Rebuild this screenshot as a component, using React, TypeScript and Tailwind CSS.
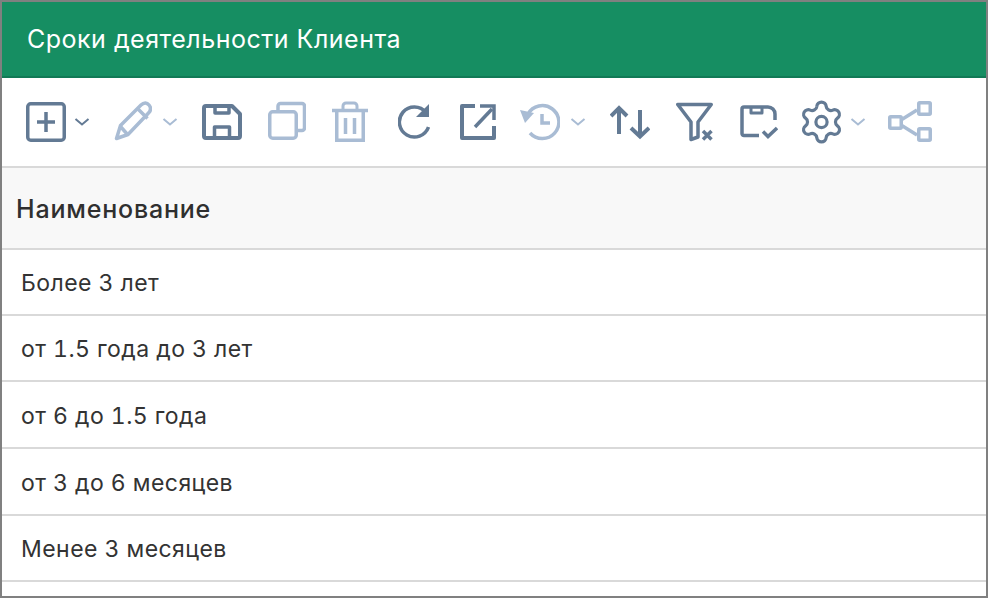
const dark = "#637a94";
const light = "#a9bcd4";

function Chevron({ ml }: { ml: string }) {
  return (
    <svg className={ml} width="16" height="44" viewBox="0 0 16 44" fill="none" stroke={light} strokeWidth="2">
      <path d="M1.5 19l6.5 5.5 6.5-5.5" />
    </svg>
  );
}

function Rows() {
  const rows = ["Более 3 лет", "от 1.5 года до 3 лет", "от 6 до 1.5 года", "от 3 до 6 месяцев", "Менее 3 месяцев"];
  return (
    <div>
      {rows.map((r, i) => (
        <div
          key={r}
          className={
            "flex items-center border-b-2 border-[#d9d9d9] pl-[19px] pt-[3px] text-[23px] tabular-nums tracking-[0.45px] text-[#333333] " +
            (i === 3 || i === 2 ? "h-[67px]" : "h-[66px]")
          }
        >
          {r}
        </div>
      ))}
    </div>
  );
}

export default function App() {
  return (
    <div className="h-[598px] w-[988px] overflow-hidden border-2 border-[#808080] bg-white font-['Inter',sans-serif]">
      {/* header */}
      <div className="flex h-[76px] items-center border-b-2 border-[#127a56] bg-[#168e62] pl-[25px] pt-[1px] text-[25px] tracking-[0.5px] text-white">
        Сроки деятельности Клиента
      </div>

      {/* toolbar */}
      <div className="flex h-[90px] items-center border-b-2 border-[#d9d9d9] pl-[24px]">
        {/* add */}
        <svg width="40" height="44" viewBox="0 0 40 44" fill="none" stroke={dark} strokeWidth="3.5">
          <rect x="1.75" y="3.75" width="36.5" height="36.5" rx="3" />
          <path d="M20 12v20M11 22h18" strokeWidth="3.5" />
        </svg>
        <svg className="ml-[8px]" width="16" height="44" viewBox="0 0 16 44" fill="none" stroke={dark} strokeWidth="2">
          <path d="M1.5 19l6.5 5.5 6.5-5.5" />
        </svg>
        {/* edit */}
        <svg className="ml-[24px]" width="38" height="44" viewBox="0 0 38 44" fill="none" stroke={light} strokeWidth="3.5" strokeLinejoin="round">
          <path d="M2.500 38.500l4-13L27 5c3-3 6-2.500 8 0s2.500 5-.5 8L14 34.500z" />
          <path d="M23.500 8.500l10 10M6 26l8 9" />
        </svg>
        <Chevron ml="ml-[10px]" />
        {/* save */}
        <svg className="ml-[24px]" width="40" height="44" viewBox="0 0 40 44" fill="none" stroke={dark} strokeWidth="4" strokeLinejoin="round">
          <path d="M5 6h25l8 8v22a2 2 0 0 1-2 2H4a2 2 0 0 1-2-2V8a2 2 0 0 1 2-2z" />
          <path d="M13 6v7h14V6" strokeWidth="3.500" />
          <path d="M12.500 38V27h15v11" strokeWidth="3.500" />
        </svg>
        {/* copy */}
        <svg className="ml-[26px]" width="38" height="44" viewBox="0 0 38 44" fill="none" stroke={light} strokeWidth="3.500">
          <rect x="1.750" y="11.750" width="26.500" height="26.500" rx="3" />
          <path d="M10 11V6a2.500 2.500 0 0 1 2.500-2.500h21.500a2.500 2.500 0 0 1 2.500 2.500v22a2.500 2.500 0 0 1-2.500 2.500H29" />
        </svg>
        {/* delete */}
        <svg className="ml-[26px]" width="36" height="44" viewBox="0 0 36 44" fill="none" stroke={light} strokeWidth="3.500">
          <path d="M0 10.500h36M4.750 10.500V40.200h26.500V10.500" />
          <path d="M11 10V6a3 3 0 0 1 3-3h8a3 3 0 0 1 3 3v4" strokeWidth="3" />
          <path d="M13.500 18v16M22.500 18v16" />
        </svg>
        {/* refresh */}
        <svg className="ml-[30px]" width="32" height="44" viewBox="0 0 32 44" fill="none" stroke={dark} strokeWidth="3.500">
          <path d="M28 12.500A15 15 0 1 0 30.500 27" />
          <path d="M31 4v13H18z" fill={dark} stroke="none" />
        </svg>
        {/* open */}
        <svg className="ml-[30px]" width="36" height="44" viewBox="0 0 36 44" fill="none" stroke={dark} strokeWidth="4">
          <path d="M15 6H2v32h32V26" strokeLinejoin="round" />
          <path d="M15 27L32 9" strokeWidth="3.500" />
          <path d="M20 6h14v14" strokeWidth="3.500" />
        </svg>
        {/* history */}
        <svg className="ml-[24px]" width="40" height="44" viewBox="0 0 40 44" fill="none" stroke={light} strokeWidth="3.500">
          <path d="M8 14A16.500 16.500 0 1 1 10 33" />
          <path d="M0 10l14 3-9 10z" fill={light} stroke="none" />
          <path d="M22 14v9h8" />
        </svg>
        <Chevron ml="ml-[10px]" />
        {/* sort */}
        <svg className="ml-[24px]" width="40" height="44" viewBox="0 0 40 44" fill="none" stroke={dark} strokeWidth="4">
          <path d="M9 8v26M1 16l8-8 8 8" />
          <path d="M30 10v26M21 28l9 8.500 9-8.500" />
        </svg>
        {/* filter clear */}
        <svg className="ml-[26px]" width="38" height="44" viewBox="0 0 38 44" fill="none" stroke={dark} strokeWidth="3.500" strokeLinejoin="round">
          <path d="M1.750 4.500h33.500L22 22v15l-7 2.500V22z" />
          <path d="M27 31l8.500 8.500M35.500 31L27 39.500" />
        </svg>
        {/* save state */}
        <svg className="ml-[26px]" width="38" height="44" viewBox="0 0 38 44" fill="none" stroke={dark} strokeWidth="3.500" strokeLinejoin="round">
          <path d="M19 35.500H4a2 2 0 0 1-2-2V9a2 2 0 0 1 2-2h24a7 7 0 0 1 7 7v6" />
          <path d="M11 7v6h11V7" strokeWidth="3" />
          <path d="M23 31.500l5 5 9-8.500" strokeLinejoin="miter" />
        </svg>
        {/* settings */}
        <svg className="ml-[23px]" width="41" height="44" viewBox="1.750 1 20.500 22" fill="none" stroke={dark} strokeWidth="1.600" strokeLinejoin="round">
          <path d="M9.671 4.136a2.340 2.340 0 0 1 4.659 0 2.340 2.340 0 0 0 3.319 1.915 2.340 2.340 0 0 1 2.330 4.033 2.340 2.340 0 0 0 0 3.831 2.340 2.340 0 0 1-2.330 4.033 2.340 2.340 0 0 0-3.319 1.915 2.340 2.340 0 0 1-4.659 0 2.340 2.340 0 0 0-3.320-1.915 2.340 2.340 0 0 1-2.330-4.033 2.340 2.340 0 0 0 0-3.831A2.340 2.340 0 0 1 6.350 6.051a2.340 2.340 0 0 0 3.320-1.915" />
          <circle cx="12" cy="12" r="2.800" />
        </svg>
        <Chevron ml="ml-[8px]" />
        {/* share */}
        <svg className="ml-[22px]" width="44" height="44" viewBox="0 0 44 44" fill="none" stroke={light} strokeWidth="3.500">
          <rect x="1.750" y="16.750" width="11.500" height="11.500" rx="1" />
          <rect x="30.750" y="2.750" width="11.500" height="11.500" rx="1" />
          <rect x="30.750" y="28.750" width="11.500" height="11.500" rx="1" />
          <path d="M13 20l16-10M13 25l16 10" />
        </svg>
      </div>

      {/* table head */}
      <div className="flex h-[82px] items-center border-b-2 border-[#d9d9d9] bg-[#f8f8f8] pl-[14px] pt-[3px] text-[25px] font-medium tracking-[0.8px] text-[#2f2f2f]">
        Наименование
      </div>
      <Rows />
    </div>
  );
}
